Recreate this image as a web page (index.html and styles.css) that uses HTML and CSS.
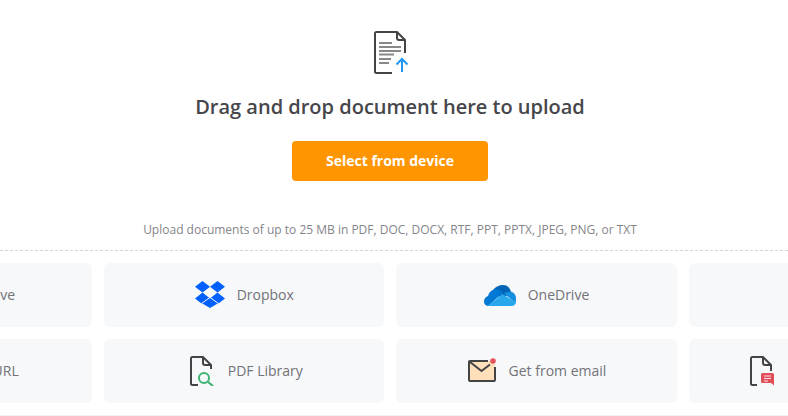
FILE: index.html
```html
<!DOCTYPE html>
<html lang="en">

<head>
  <meta charset="UTF-8">
  <title>Upload document</title>
  <link rel="stylesheet" href="styles.css">
</head>

<body>
  <main class="page">
    <!-- Drop area -->
    <section class="dropzone">
      <svg class="upload-icon" width="36" height="46" viewBox="0 0 36 46">
        <path d="M20 44H4.500A1.500 1.500 0 0 1 3 42.500v-38A1.500 1.500 0 0 1 4.500 3H25l8 8v13" fill="none" stroke="#444" stroke-width="2"/>
        <path d="M25 3v6a2 2 0 0 0 2 2h6" fill="none" stroke="#444" stroke-width="2"/>
        <path d="M7 14h13M7 18h22M7 22h22M7 25.500h15M7 30h12M7 34h10" stroke="#888" stroke-width="2"/>
        <path d="M30 43V30M24.500 35.500l5.500-5.500 5.500 5.500" fill="none" stroke="#2196f3" stroke-width="2"/>
      </svg>
      <h1>Drag and drop document here to upload</h1>
      <button class="select-btn">Select from device</button>
      <p class="hint">Upload documents of up to 25 MB in PDF, DOC, DOCX, RTF, PPT, PPTX, JPEG, PNG, or TXT</p>
    </section>

    <!-- Other sources -->
    <section class="sources">
      <div class="source-grid">
        <div class="source"><span class="icon-box"></span><span>Google Drive</span></div>
        <div class="source">
          <svg class="icon-box" width="30" height="28" viewBox="0 0 30 28">
            <path fill="#0061fe" d="M7.500 0L0 5.800l7.500 5.800L15 5.800zM22.500 0L15 5.800l7.500 5.800L30 5.800zM0 17.400L7.500 23.200 15 17.400 7.500 11.600zM22.500 11.600L15 17.400l7.500 5.800 7.500-5.800z"/>
            <path fill="#0061fe" stroke="#f7f8fa" d="M15 16.500l-8.500 6 8.500 5 8.500-5z"/>
          </svg>
          <span>Dropbox</span>
        </div>
        <div class="source">
          <svg width="32" height="21" viewBox="0 0 32 21">
            <path fill="#0364b8" d="M9 5C11 2 15 0 19 0c4 0 7 2.500 8 7L20 13 9 9z"/>
            <path fill="#0078d4" d="M13 4.300C8.500 4 4.500 7.500 4.200 11 1.500 11.500 0 14 0 16.500c0 2.200 1.500 4.500 4 4.500l9-8 6-4.500C17.500 6 15.500 4.500 13 4.300z"/>
            <path fill="#1490df" d="M27 6.800c3 .5 5 3.500 5 6.500 0 1.600 0 3-.5 4.700L20 8.500c2-1.200 4.500-2 7-1.700z"/>
            <path fill="#28a8ea" d="M3.500 21L13 13.500l5.500-4.500L32 17.500c-.6 2-2 3.500-4 3.500z"/>
          </svg>
          <span>OneDrive</span>
        </div>
        <div class="source"></div>
        <div class="source"><span class="icon-box"></span><span>Add from URL</span></div>
        <div class="source">
          <svg class="icon-box" width="30" height="30" viewBox="0 0 30 30">
            <path d="M12 29H6.500A1.500 1.500 0 0 1 5 27.500v-25A1.500 1.500 0 0 1 6.500 1H17l8 8v4" fill="none" stroke="#444" stroke-width="2"/>
            <path d="M17 1v6a2 2 0 0 0 2 2h6" fill="none" stroke="#444" stroke-width="2"/>
            <circle cx="18" cy="22" r="5" fill="#f7f8fa" stroke="#3cb371" stroke-width="2"/>
            <path d="M22 26l5 4" stroke="#3cb371" stroke-width="2"/>
          </svg>
          <span>PDF Library</span>
        </div>
        <div class="source">
          <svg class="icon-box" width="30" height="30" viewBox="0 0 30 30">
            <path fill="#ffe0bb" d="M2 5h24l2 3v17H2z"/>
            <path d="M21 5H3a1 1 0 0 0-1 1v18a1 1 0 0 0 1 1h24a1 1 0 0 0 1-1V11" fill="none" stroke="#444" stroke-width="2"/>
            <path d="M3 6l11.500 9L23 8.500" fill="none" stroke="#444" stroke-width="2"/>
            <circle cx="26" cy="5" r="2.800" fill="#e5535d"/>
          </svg>
          <span>Get from email</span>
        </div>
        <div class="source source-clipped">
          <svg class="icon-box" width="30" height="30" viewBox="0 0 30 30">
            <path d="M11 29H6.500A1.500 1.500 0 0 1 5 27.500v-25A1.500 1.500 0 0 1 6.500 1H17l8 8v6" fill="none" stroke="#444" stroke-width="2"/>
            <path d="M17 1v6a2 2 0 0 0 2 2h6" fill="none" stroke="#444" stroke-width="2"/>
            <path fill="#e04f58" d="M16.500 17h10a1.500 1.500 0 0 1 1.500 1.500v11L25 27h-8.500a1.500 1.500 0 0 1-1.500-1.500v-7a1.500 1.500 0 0 1 1.500-1.500z"/>
            <path d="M18 20h7M18 22.500h7M18 25h4" stroke="#fde" stroke-width="1"/>
          </svg>
        </div>
      </div>
    </section>
  </main>
</body>

</html>
```

FILE: styles.css
```css
/* Basic styling */
html,
body {
  margin: 0;
  height: 100%;
  overflow: hidden;
}

body {
  font-family: "Open Sans", Arial, sans-serif;
  background-color: #fff;
  color: #46464b;
}

.page {
  height: 416px;
  overflow: hidden;
}

.dropzone {
  width: 780px;
  height: 250px;
  padding-top: 29px;
  box-sizing: border-box;
  text-align: center;
}

.upload-icon {
  display: block;
  margin: 0 auto;
}

.dropzone h1 {
  margin: 18px 0 0;
  font-size: 20px;
  line-height: 27px;
  font-weight: 600;
}

.select-btn {
  display: block;
  width: 196px;
  height: 40px;
  margin: 21px auto 0;
  padding: 0 0 2px;
  border: none;
  border-radius: 4px;
  background-color: #ff9500;
  color: #fff;
  font-family: inherit;
  font-size: 14px;
  font-weight: 700;
}

.hint {
  margin: 40px 0 0;
  font-size: 12px;
  line-height: 18px;
  color: #85858a;
}

.sources {
  padding: 12px 0;
  overflow: hidden;
  border-top: 1px dashed #d4d4d6;
  border-bottom: 2px solid #f2f2f4;
}

.source-grid {
  display: grid;
  grid-template-columns: repeat(4, 280.2px);
  grid-auto-rows: 64px;
  gap: 12px;
  margin-left: -188px;
}

.source {
  display: flex;
  align-items: center;
  justify-content: center;
  gap: 12px;
  border-radius: 6px;
  background-color: #f7f8fa;
  font-size: 14px;
  color: #727277;
}

.source span {
  margin-bottom: 2px;
}

/* only the left of this card fits in the window */
.source-clipped {
  justify-content: flex-start;
  padding-left: 57px;
}

.icon-box {
  display: block;
  flex: none;
  width: 30px;
}
```
